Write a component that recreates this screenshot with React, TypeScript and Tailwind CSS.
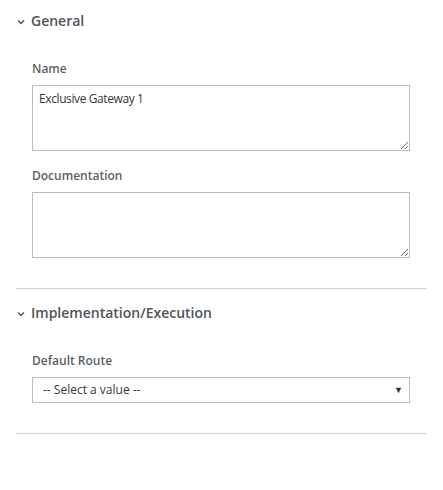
import React from "react";

const Chevron = () => (
  <svg width="8" height="6" viewBox="0 0 8 6" className="mr-[6px] mt-[2px]">
    <path d="M1 1.5 L4 4.5 L7 1.5" fill="none" stroke="#4d5258" strokeWidth="1.4" />
  </svg>
);

function Header({ title }: { title: string }) {
  return (
    <div className="flex items-center h-5 pl-[1px] text-[14px] font-semibold text-[#4f5459] leading-5">
      <Chevron />
      <span>{title}</span>
    </div>
  );
}

function Label({ text }: { text: string }) {
  return <div className="h-4 leading-4 text-[12px] font-semibold text-[#5b5f64] mb-2">{text}</div>;
}

export default function App() {
  return (
    <div className="w-[443px] h-[490px] bg-white px-4" style={{ fontFamily: '"Open Sans", sans-serif' }}>
      <div className="pt-[11px] pb-[30px] border-b border-[#d1d1d1]">
        <Header title="General" />
        <div className="pl-4 pr-[16px] mt-[30px]">
          <Label text="Name" />
          <textarea
            defaultValue="Exclusive Gateway 1"
            className="block w-[378px] h-[66px] border border-[#bbbbbb] px-[6px] py-[4px] text-[12px] tracking-[-0.4px] text-[#363636] outline-none"
          />
          <div className="mt-[17px]">
            <Label text="Documentation" />
            <textarea className="block w-[378px] h-[66px] border border-[#bbbbbb] px-[6px] py-[4px] text-[12px] text-[#363636] outline-none" />
          </div>
        </div>
      </div>
      <div className="pt-[14px] pb-[30px] border-b border-[#d1d1d1]">
        <Header title="Implementation/Execution" />
        <div className="pl-4 mt-[30px]">
          <Label text="Default Route" />
          <div className="flex items-center justify-between w-[378px] h-[26px] border border-[#bbbbbb] pl-[10px] pr-[6px] text-[12px] text-[#363636]">
            <span>-- Select a value --</span>
            <span className="text-[9px] text-[#333]">▼</span>
          </div>
        </div>
      </div>
    </div>
  );
}
